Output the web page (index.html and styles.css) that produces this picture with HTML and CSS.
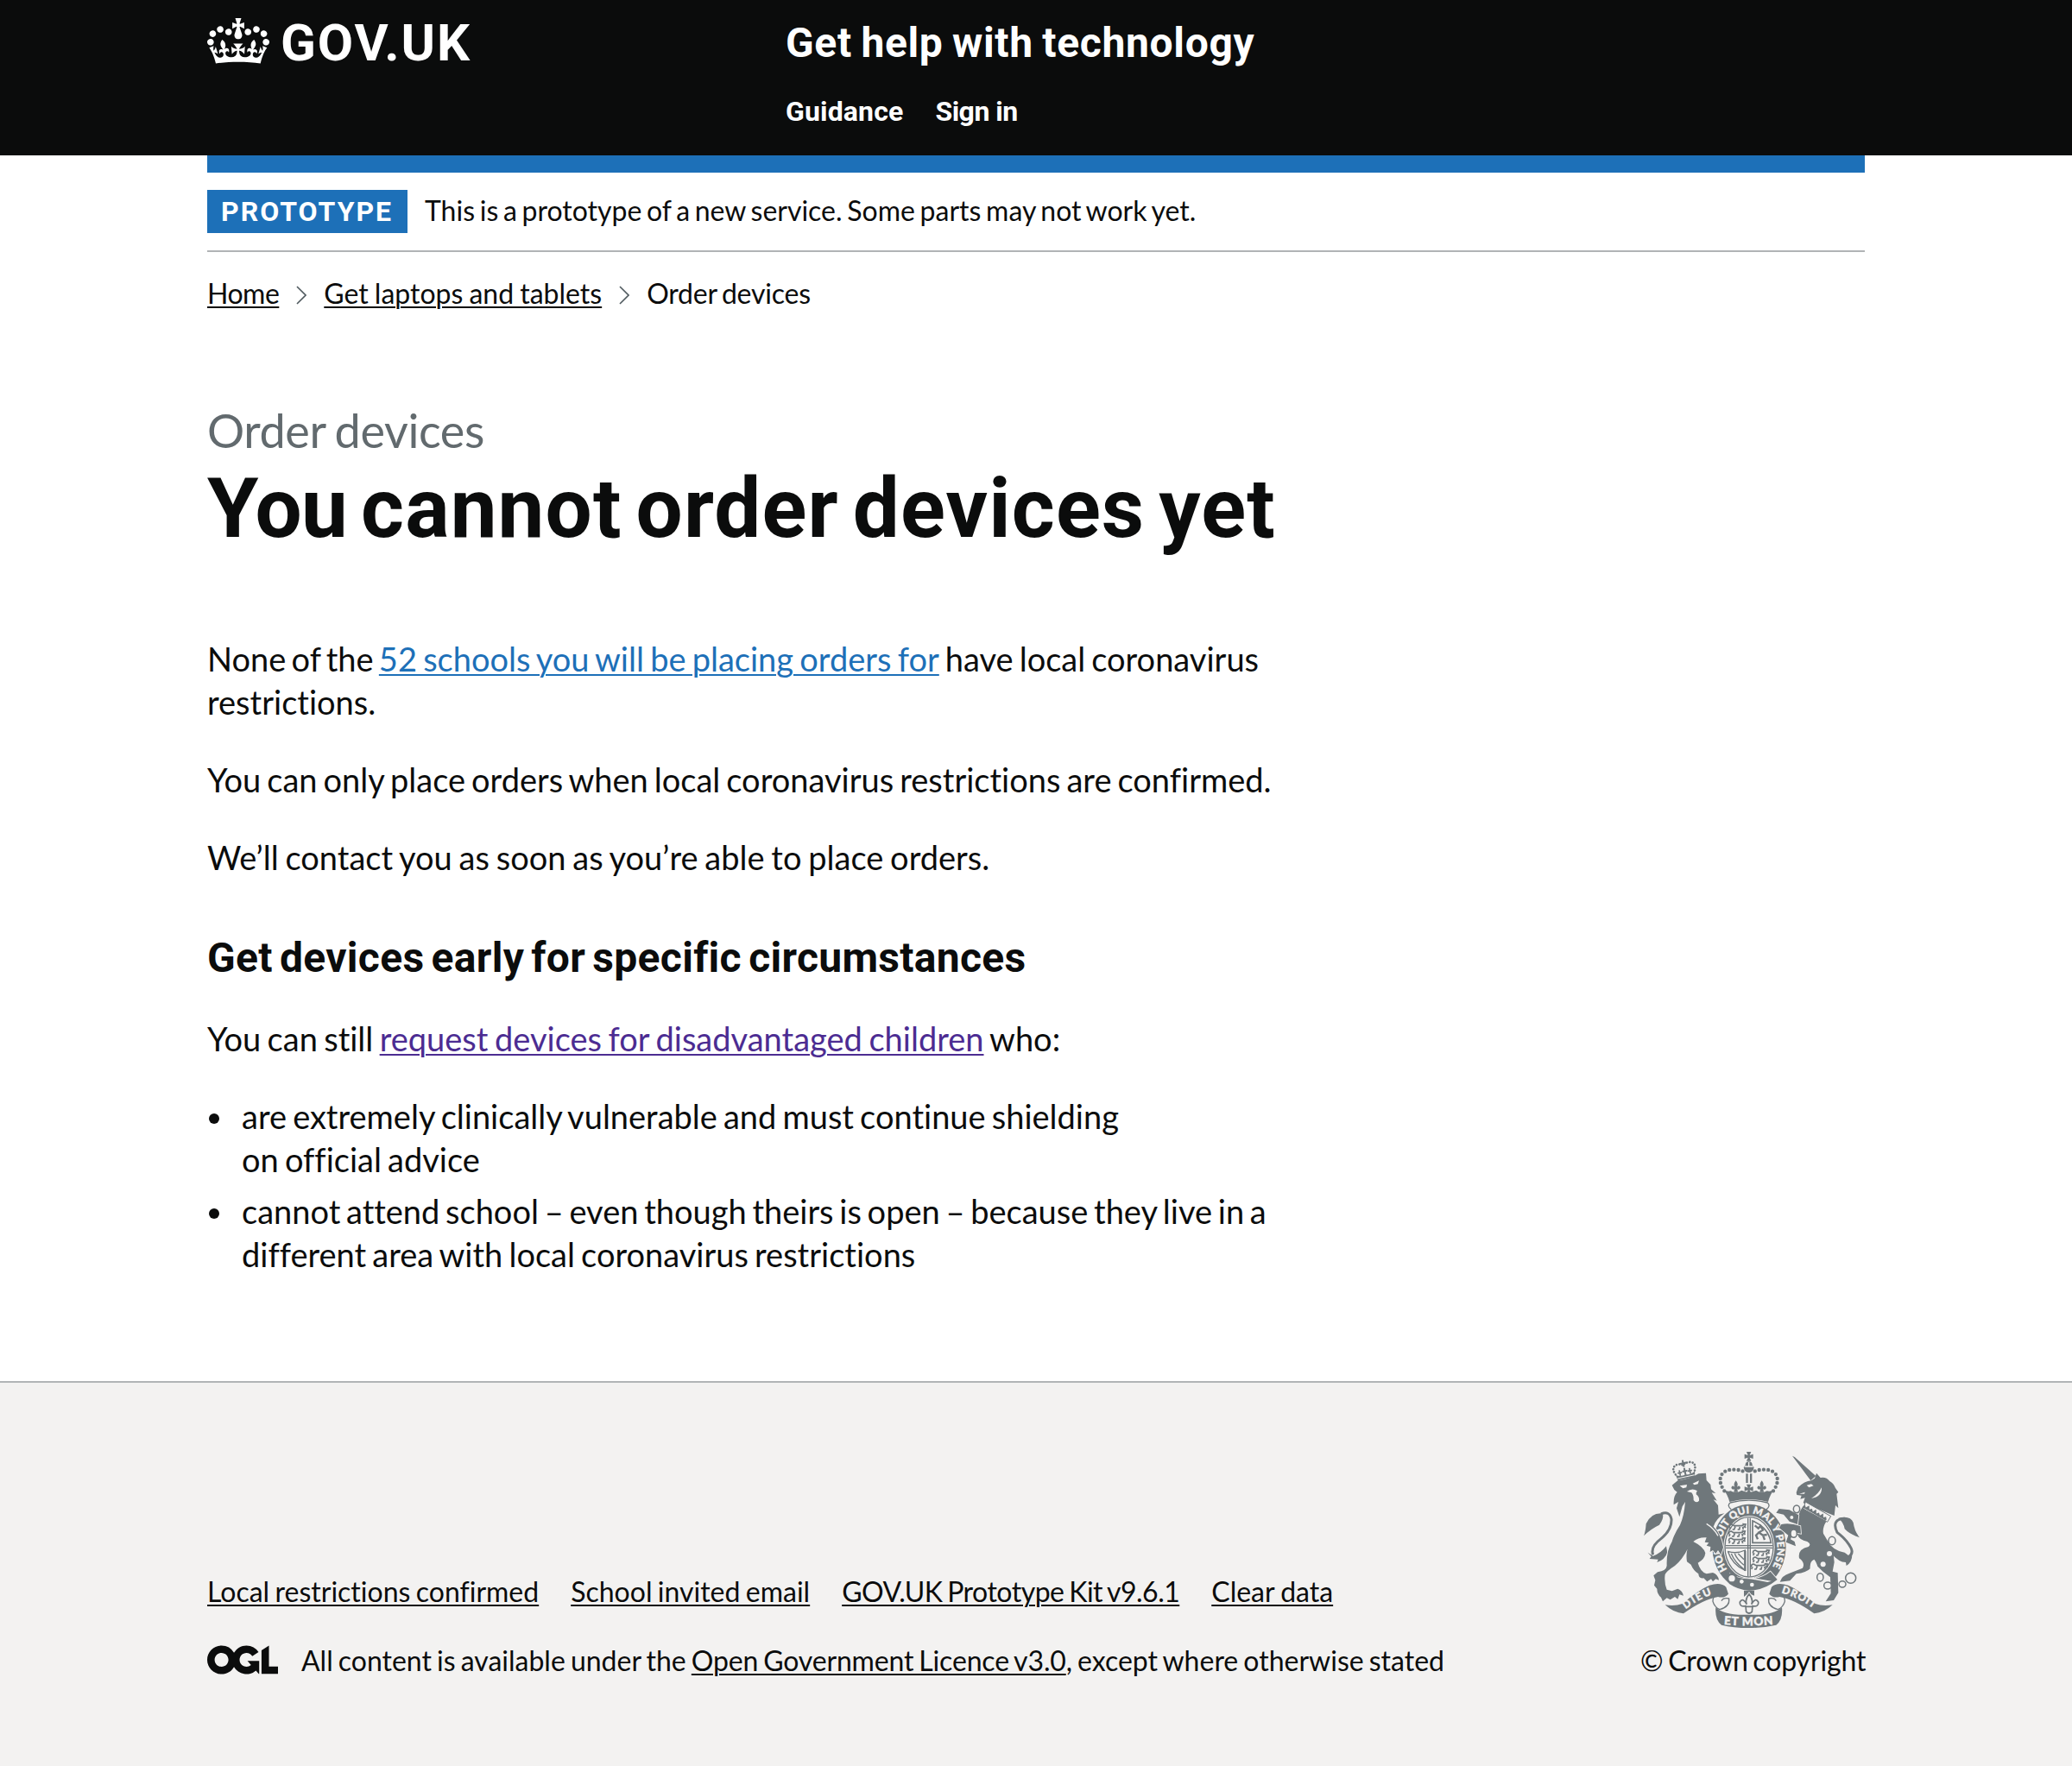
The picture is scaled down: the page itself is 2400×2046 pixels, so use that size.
FILE: index.html
```html
<!DOCTYPE html>
<html lang="en">
<head>
<meta charset="utf-8">
<title>You cannot order devices yet – Get help with technology</title>
<link rel="stylesheet" href="styles.css">
</head>
<body>
<header class="header">
  <div class="container header-inner">
    <a class="logo" href="#">
      <svg class="logo-crown" viewBox="0 0 132 97" aria-hidden="true"><path fill="currentColor" fill-rule="evenodd" d="M25 30.2c3.5 1.5 7.7-.2 9.1-3.7 1.5-3.6-.2-7.8-3.9-9.2-3.6-1.4-7.6.3-9.1 3.9-1.4 3.5.3 7.5 3.9 9zM9 39.5c3.6 1.5 7.8-.2 9.2-3.7 1.5-3.6-.2-7.8-3.9-9.1-3.6-1.5-7.6.2-9.1 3.8-1.4 3.5.3 7.5 3.8 9zM4.4 57.2c3.5 1.5 7.7-.2 9.1-3.8 1.5-3.6-.2-7.7-3.9-9.1-3.5-1.5-7.6.3-9.1 3.8-1.4 3.5.3 7.6 3.9 9.1zm38.3-21.4c3.5 1.5 7.7-.2 9.1-3.8 1.5-3.6-.2-7.7-3.9-9.1-3.6-1.5-7.6.3-9.1 3.8-1.3 3.6.4 7.7 3.9 9.1zm64.4-5.6c-3.6 1.5-7.8-.2-9.1-3.7-1.5-3.6.2-7.8 3.8-9.2 3.6-1.4 7.7.3 9.2 3.9 1.3 3.5-.4 7.5-3.9 9zm15.9 9.3c-3.6 1.5-7.7-.2-9.1-3.7-1.5-3.6.2-7.8 3.7-9.1 3.6-1.5 7.7.2 9.2 3.8 1.5 3.5-.3 7.5-3.8 9zm4.7 17.7c-3.6 1.5-7.8-.2-9.2-3.8-1.5-3.6.2-7.7 3.9-9.1 3.6-1.5 7.7.3 9.2 3.8 1.3 3.5-.4 7.6-3.9 9.1zM89.3 35.8c-3.6 1.5-7.8-.2-9.2-3.8-1.4-3.6.2-7.7 3.9-9.1 3.6-1.5 7.7.3 9.2 3.8 1.4 3.6-.3 7.7-3.9 9.1zM69.7 17.7l8.9 4.7V9.3l-8.9 2.8c-.2-.3-.5-.6-.9-.9L72.4 0H59.6l3.5 11.2c-.3.3-.6.5-.9.9l-8.8-2.8v13.1l8.8-4.7c.3.3.6.7.9.9l-5 15.4v.1c-.2.8-.4 1.6-.4 2.4 0 4.1 3.1 7.5 7 8.1h.2c.3 0 .7.1 1 .1.4 0 .7 0 1-.1h.2c4-.6 7.1-4.1 7.1-8.1 0-.8-.1-1.7-.4-2.4V34l-5.1-15.4c.4-.2.7-.6 1-.9zM66 92.8c16.9 0 32.8 1.1 47.1 3.2 4-16.9 8.9-26.7 14-33.5l-9.6-3.4c1 4.9 1.1 7.2 0 10.2-1.5-1.4-3-4.3-4.2-8.7L108.6 76c2.8-2 5-3.2 7.5-3.3-4.4 9.4-10 11.9-13.6 11.2-4.3-.8-6.3-4.6-5.6-7.9 1-4.7 5.7-5.9 8-.5 4.3-8.7-3-11.4-7.6-8.8 7.1-7.2 7.9-13.5 2.1-21.1-8 6.1-8.1 12.3-4.5 20.8-4.7-5.4-12.1-2.5-9.5 6.2 3.4-5.2 7.9-2 7.2 3.1-.6 4.3-6.4 7.8-13.5 7.2-10.3-.9-10.9-8-11.2-13.8 2.5-.5 7.1 1.8 11 7.3L80.2 60c-4.1 4.4-8 5.3-12.3 5.4 1.4-4.4 8-11.6 8-11.6H55.5s6.4 7.2 7.9 11.6c-4.2-.1-8-1-12.3-5.4l1.4 16.4c3.9-5.5 8.5-7.7 10.9-7.3-.3 5.8-.9 12.8-11.1 13.8-7.2.6-12.9-2.9-13.5-7.2-.7-5 3.8-8.3 7.1-3.1 2.7-8.7-4.6-11.6-9.4-6.2 3.7-8.5 3.6-14.7-4.6-20.8-5.8 7.6-5 13.9 2.2 21.1-4.7-2.6-11.9.1-7.7 8.8 2.3-5.5 7.1-4.2 8.1.5.7 3.3-1.3 7.1-5.7 7.9-3.5.7-9-1.8-13.5-11.2 2.5.1 4.7 1.3 7.5 3.3l-4.7-15.4c-1.2 4.4-2.7 7.2-4.3 8.7-1.1-3-.9-5.3 0-10.2l-9.5 3.4c5 6.9 9.9 16.7 14 33.5 14.8-2.1 30.8-3.2 47.7-3.2z"/></svg>
      <span class="logo-text">GOV.UK</span>
    </a>
    <div class="header-content">
      <a class="service-name" href="#">Get help with technology</a>
      <nav class="header-nav">
        <a class="nav-guidance" href="#">Guidance</a>
        <a class="nav-signin" href="#">Sign in</a>
      </nav>
    </div>
  </div>
</header>

<div class="container page">
  <div class="phase-banner">
    <strong class="tag">PROTOTYPE</strong>
    <span class="phase-text">This is a prototype of a new service. Some parts may not work yet.</span>
  </div>
  <nav class="breadcrumbs">
    <a class="crumb-home" href="#">Home</a>
    <svg class="chevron" viewBox="0 0 12 22" aria-hidden="true"><path d="M1 1l10 10L1 21"/></svg>
    <a class="crumb-laptops" href="#">Get laptops and tablets</a>
    <svg class="chevron" viewBox="0 0 12 22" aria-hidden="true"><path d="M1 1l10 10L1 21"/></svg>
    <span class="crumb-current">Order devices</span>
  </nav>

  <main class="main">
    <span class="caption">Order devices</span>
    <h1 class="title"><span class="title-lead">You</span> cannot order devices yet</h1>
    <p class="body body-none"><span class="lead-none">None of the </span><a class="link link-schools" href="#">52 schools you will be placing orders for</a> have local coronavirus<br>restrictions.</p>
    <p class="body body-only">You can only place orders when local coronavirus restrictions are confirmed.</p>
    <p class="body body-contact">We’ll contact you as soon as you’re able to place orders.</p>
    <h2 class="subtitle">Get devices early for specific circumstances</h2>
    <p class="body body-still">You can still <a class="link link-visited" href="#">request devices for disadvantaged children</a> who:</p>
    <ul class="list">
      <li>are extremely clinically vulnerable and must continue shielding<br>on official advice</li>
      <li><span class="item-wide">cannot attend school – even though theirs is open – because they live in a</span><br>different area with local coronavirus restrictions</li>
    </ul>
  </main>
</div>

<footer class="footer">
  <div class="container footer-inner">
    <div class="footer-meta">
      <nav class="footer-links">
        <a class="foot-local" href="#">Local restrictions confirmed</a>
        <a class="foot-school" href="#">School invited email</a>
        <a class="foot-kit" href="#">GOV.UK Prototype Kit v9.6.1</a>
        <a class="foot-clear" href="#">Clear data</a>
      </nav>
      <div class="licence">
        <svg class="ogl" viewBox="0 0 483.2 195.7" aria-hidden="true"><path fill="currentColor" d="M421.5 142.8V.1l-50.7 32.3v161.1h112.4v-50.7zm-122.3-9.6A47.12 47.12 0 0 1 221 97.8c0-26 21.1-47.1 47.1-47.1 16.7 0 31.4 8.7 39.7 21.8l42.7-27.2A97.63 97.63 0 0 0 268.1 0c-36.5 0-68.3 20.1-85.1 49.7A98 98 0 0 0 97.8 0C43.9 0 0 43.9 0 97.8s43.9 97.8 97.8 97.8c36.5 0 68.3-20.1 85.1-49.7a97.76 97.76 0 0 0 149.6 25.4l19.4 22.2h3v-87.8h-80l24.3 27.5zM97.8 145c-26 0-47.1-21.1-47.1-47.1s21.1-47.1 47.1-47.1 47.1 21.1 47.1 47.1S123.8 145 97.8 145"/></svg>
        <span class="licence-text">All content is available under the <a class="licence-link" href="#">Open Government Licence v3.0</a>, except where otherwise stated</span>
      </div>
    </div>
    <a class="copyright" href="#">
      <svg class="crest" viewBox="72 66 750 612" aria-hidden="true">
        <defs>
          <path id="garter-line" d="M371 486A98 119 0 1 1 505 486"/>
          <path id="dieu-line" d="M218 613Q262 578 320 558"/>
          <path id="mon-line" d="M350 666Q437 674 524 666"/>
          <path id="droit-line" d="M550 556Q612 573 668 615"/>
          <path id="pattee" d="M-8-16H8L3-4 15-8V8L3 4 8 16H-8L-3 4-15 8V-8L-3-4Z"/>
          <path id="fleur" d="M0-20Q10-8 4 2Q14-6 16 6Q10 14 5 9L7 20H-7L-5 9Q-10 14-16 6Q-14-6-4 2Q-10-8 0-20Z"/>
          <g id="passant" class="thin"><path d="M-28 3Q-30-8-20-8L-12-3H12Q22-4 20-9L28-8L25 0L18 3L20 10M-8 0L-12 10L-18 10M8 1L6 10H0M-24 2L-28 10M24-3L28 4"/></g>
        </defs>

        <!-- crown -->
        <use href="#pattee" x="437" y="82"/>
        <path d="M425 112Q425 100 437 100Q449 100 449 112L455 120Q452 138 437 138Q422 138 419 120Z"/>
        <path class="cut" d="M422 117H452M437 102V117"/>
        <path class="beads" d="M352 202C322 160 342 126 384 128Q408 127 424 138"/>
        <path class="beads" d="M522 202C552 160 532 126 490 128Q466 127 450 138"/>
        <path d="M427 142h7v32h-7zM441 142h7v32h-7z"/>
        <use href="#fleur" x="392" y="186"/>
        <use href="#fleur" x="482" y="186"/>
        <use href="#pattee" x="437" y="195"/>
        <path d="M348 196Q360 206 374 202Q392 212 412 200Q437 212 462 200Q482 212 500 202Q514 206 526 196Q510 216 504 240Q437 222 370 240Q364 216 348 196Z"/>
        <path class="line" d="M372 243Q437 226 502 243Q514 254 498 266M372 243Q360 254 376 266"/>

        <!-- garter and shield -->
        <ellipse cx="438" cy="397" rx="128" ry="149"/>
        <ellipse class="paper" cx="438" cy="397" rx="89" ry="109"/>
        <ellipse class="line" cx="438" cy="397" rx="84" ry="104"/>
        <path class="line" d="M434 296V498M442 296V498M356 392H520M356 400H520"/>
        <use href="#passant" x="398" y="326"/><use href="#passant" x="396" y="350"/><use href="#passant" x="396" y="374"/>
        <use href="#passant" x="480" y="416"/><use href="#passant" x="480" y="440"/><use href="#passant" x="474" y="464"/>
        <path class="thin" d="M450 306Q506 330 514 382H450Z"/>
        <path class="bold" d="M458 322l12 10 8-8 8 14-14 8 14 10 14-2M472 346l-10 10 6 14M486 356l6 16"/>
        <path class="line" d="M364 412Q394 422 424 408V478Q380 460 364 412M376 420Q388 450 420 474M388 420Q396 440 420 460M400 420L420 440"/>
        <path class="bold" d="M424 410V480"/>
        <text class="motto motto-ring"><textPath href="#garter-line" startOffset="14" textLength="490">HON SOIT QUI MAL Y PENSE</textPath></text>
        <path class="edge" d="M372 490Q400 508 438 508Q480 508 512 482L536 510Q490 548 438 548Q400 546 368 524Z"/>
        <circle class="ring" cx="378" cy="506" r="15"/>
        <circle class="paper" cx="412" cy="517" r="7"/><circle class="paper" cx="448" cy="528" r="7"/>
        <path class="paper" d="M440 503L516 515L502 519L434 506Z"/>

        <!-- lion -->
        <path class="line tail" d="M104 424Q94 396 132 368Q170 336 168 300Q162 270 132 282"/>
        <path d="M72 358Q78 344 80 316Q98 276 138 280Q142 300 126 320Q96 334 72 358Z"/>
        <path d="M86 416L104 428Q130 420 150 394L154 416Q146 440 118 450L122 440L92 438L98 430Z"/>
        <path class="edge" d="M170 182L190 166Q235 160 262 142L288 140L290 165L304 180L306 196L322 210L308 208L326 236L314 232L330 252L332 284L352 280Q322 300 314 326Q340 350 348 398L340 424L330 408L322 420L312 408L302 414L304 396L290 392L298 382L284 380L290 364Q262 362 244 378Q280 396 286 418Q284 440 260 452Q268 482 290 490L312 486Q330 492 333 512L322 508L312 517L306 508L292 517L280 505Q262 508 262 490Q244 478 236 458L222 448Q218 420 224 404Q206 440 180 462Q152 480 146 492Q142 520 152 545L170 550L190 542Q206 548 210 566L196 562L190 578L180 570L164 580L152 574L138 586L132 572Q118 560 118 542L108 530L112 512L106 496L120 484Q150 480 152 462Q150 410 170 378Q178 350 198 320Q212 290 216 240L206 256L196 292L186 262L192 240L176 250Q174 220 188 206L178 198Z"/>
        <path class="paper" d="M197 184L222 180L220 190L208 193ZM242 176L264 166L260 178L248 181ZM222 204Q240 190 258 202Q252 208 254 214Q266 222 264 236Q254 246 245 234Q246 218 238 208Z"/>
        <path class="cut" d="M290 316Q316 332 330 358"/>
        <g transform="rotate(-12 214 130)">
          <path d="M180 140Q196 150 214 146Q232 150 248 140L244 160H184Z"/>
          <path class="cut cut-fine" d="M184 153H244"/>
          <path class="beads beads-small" d="M180 138Q168 112 190 106Q204 104 212 112Q222 104 238 106Q260 112 248 138"/>
          <path d="M211 94h6v8h8v6h-8v10h-6v-10h-8v-6h8zM211 122h6v8h6v6h-6v12h-6v-12h-6v-6h6zM193 126h5v7h5v5h-5v8h-5v-8h-5v-5h5zM229 126h5v7h5v5h-5v8h-5v-8h-5v-5h5z"/>
        </g>

        <!-- unicorn -->
        <path d="M588 80L596 84L670 150L652 166Z"/>
        <path d="M602 208L608 190Q630 168 654 166L666 158L672 140L686 156Q706 152 718 168Q732 176 738 192L748 206L742 212L748 262L738 252L734 288Q680 266 626 244L632 226L616 230L620 218L604 216Z"/>
        <path class="paper" d="M638 182L654 178L662 184L646 190ZM690 190Q692 222 654 228Q678 214 690 190ZM612 212L632 206L630 212Z"/>
        <path class="edge" d="M626 254L706 308Q692 330 696 350Q716 384 730 410L734 450L728 482L746 487L748 556L732 582L704 586L722 558L720 502Q694 484 676 464Q670 446 664 440Q648 446 650 472Q638 486 602 490L580 514L545 518Q552 496 578 488L624 470Q634 452 612 436Q606 404 644 396Q656 388 640 378Q600 370 606 336Q600 290 626 254Z"/>
        <path class="collar" d="M634 240L722 290L710 310L626 264Z"/>
        <path transform="translate(634 243) rotate(29.6)" d="M0 19L2 7L9 14L16 2L23 14L30 7L37 14L44 2L51 14L58 7L65 14L72 2L79 14L86 7L92 14V19Z"/>
        <path class="edge" d="M610 286L578 268L542 264L532 278L558 284L578 308L606 318ZM616 324Q580 312 550 318L542 330L574 356L566 380L600 394L596 378L582 370L592 346L618 350Z"/>
        <path class="line tail" d="M782 432Q802 420 792 400Q776 370 744 346Q722 300 770 298"/>
        <path d="M748 296Q790 286 800 312Q804 342 822 364Q786 352 770 334Q766 310 748 296Z"/>
        <path d="M708 372Q728 410 770 416L786 428L796 424Q796 450 776 462L774 450Q750 450 724 420Z"/>
        <g class="chain">
          <ellipse cx="603" cy="265" rx="11" ry="13"/><ellipse cx="593" cy="350" rx="11" ry="14"/>
          <ellipse cx="726" cy="375" rx="12" ry="14"/><ellipse cx="685" cy="502" rx="11" ry="14"/>
          <ellipse cx="711" cy="531" rx="13" ry="12"/><ellipse cx="762" cy="526" rx="12" ry="11"/>
          <circle cx="791" cy="505" r="18"/>
        </g>
        <circle class="paper" cx="717" cy="420" r="9"/><circle class="paper" cx="695" cy="457" r="9"/><circle class="paper" cx="586" cy="294" r="6"/>

        <!-- motto scroll -->
        <path class="edge" d="M146 598Q180 604 206 594Q262 546 300 530Q340 518 358 536L366 560Q352 576 330 570Q280 578 210 628Q176 626 146 598Z"/>
        <path class="edge" d="M728 598Q694 604 668 594Q612 546 574 530Q534 518 516 536L508 560Q522 576 544 570Q594 578 664 628Q698 626 728 598Z"/>
        <path class="line" d="M356 540Q310 560 312 586Q318 606 336 614Q372 604 368 576Q348 572 342 584"/>
        <path class="line" d="M518 540Q564 560 562 586Q556 606 538 614Q502 604 506 576Q526 572 532 584"/>
        <path d="M322 606Q350 636 437 632Q524 636 552 606Q556 650 532 668Q490 678 437 678Q384 678 342 668Q318 650 322 606Z"/>
        <text class="motto motto-side"><textPath href="#dieu-line" textLength="104">DIEU</textPath></text>
        <text class="motto motto-base"><textPath href="#mon-line" textLength="172">ET MON</textPath></text>
        <text class="motto motto-side"><textPath href="#droit-line" textLength="124">DROIT</textPath></text>
        <path d="M420 548H456V566L446 562L438 552L430 562L420 570Z"/>
        <path class="thin" d="M438 560Q454 580 446 596Q460 570 470 588Q472 606 450 602L448 622Q438 632 428 622L426 602Q404 606 406 588Q416 570 430 596Q422 580 438 560ZM424 604H452"/>
      </svg>
      <span class="copyright-text">© Crown copyright</span>
    </a>
  </div>
</footer>
</body>
</html>
```
FILE: styles.css
```css
* { box-sizing: border-box; }
body {
  margin: 0;
  background: #fff;
  color: #0b0c0c;
  font: 32px/40px Lato, "Liberation Sans", sans-serif;
  font-variant-ligatures: none;
  word-spacing: -2.4px;
}
a {
  color: inherit;
  white-space: nowrap;
  text-decoration-thickness: 2px;
  text-underline-offset: 3px;
}
h1, h2, p, ul { margin: 0; padding: 0; }
svg { display: block; flex: none; }
.container { width: 1920px; margin: 0 auto; }

.header { height: 180px; background: #0b0c0c; color: #fff; }
.header a { text-decoration: none; }
.header, .tag, .title, .subtitle {
  font-family: Roboto, "Liberation Sans", sans-serif;
  font-weight: 700;
  word-spacing: 0;
}
.header-inner {
  display: grid;
  grid-template-columns: 670px 1fr;
  height: 200px;
  border-bottom: 20px solid #1d70b8;
}
.logo { display: flex; gap: 13px; align-items: flex-start; padding-top: 20px; }
.logo-crown { width: 72px; height: 53px; margin-top: 1px; }
.logo-text { font-size: 60px; line-height: 60px; letter-spacing: 1.9px; }
.header-content { padding-top: 25px; }
.service-name {
  display: block;
  font-size: 48px;
  line-height: 50px;
  letter-spacing: .65px;
  word-spacing: -2px;
}
.header-nav { display: flex; gap: 37px; margin-top: 34px; }
.nav-guidance { letter-spacing: .15px; }
.nav-signin { letter-spacing: -.5px; }

.page { padding-top: 20px; }
.phase-banner {
  display: flex;
  gap: 20px;
  padding: 20px 0;
  border-bottom: 2px solid #b1b4b6;
}
.tag {
  width: 232px;
  padding-left: 16px;
  background: #1d70b8;
  color: #fff;
  line-height: 50px;
  letter-spacing: 2px;
}
.phase-text { padding-top: 4px; word-spacing: -2.5px; }

.breadcrumbs { display: flex; align-items: center; margin-top: 28px; }
.chevron {
  width: 12px;
  height: 22px;
  margin: 4px 20px 0;
  fill: none;
  stroke: #505a5f;
  stroke-width: 1.6;
}
.crumb-home { letter-spacing: -.5px; }
.crumb-laptops { word-spacing: -1.1px; }
.crumb-current { letter-spacing: -.2px; }

.main { padding: 109px 0 122px; }
.caption {
  display: block;
  color: #626a6e;
  font-size: 54px;
  line-height: 60px;
  letter-spacing: -.4px;
}
.title {
  margin: 10px 0 99px;
  font-size: 96px;
  line-height: 100px;
  letter-spacing: 1.15px;
  word-spacing: -9px;
}
.title-lead { letter-spacing: -.8px; }
.body, .list { font-size: 38px; line-height: 50px; word-spacing: -2.7px; }
.body { margin-bottom: 40px; }
.lead-none { word-spacing: -3.4px; }
.body-contact { word-spacing: -1.9px; }
.body-still { word-spacing: -2.4px; }
.link { color: #1d70b8; }
.link-schools { word-spacing: -2.5px; }
.link-visited { color: #4c2c92; word-spacing: -2.1px; }
.subtitle {
  margin: 67px 0 43px;
  font-size: 48px;
  line-height: 50px;
  letter-spacing: .3px;
  word-spacing: -4px;
}
.list { list-style: none; word-spacing: -2.6px; }
.list li { position: relative; padding-left: 40px; }
.list li + li { margin-top: 10px; }
.list li::before {
  content: "";
  position: absolute;
  left: 2px;
  top: 22px;
  width: 12px;
  height: 12px;
  border-radius: 50%;
  background: #0b0c0c;
}
.item-wide { word-spacing: -3px; }

.footer { height: 446px; border-top: 2px solid #b1b4b6; background: #f3f2f1; }
.footer-inner { display: flex; justify-content: space-between; align-items: flex-end; padding-top: 80px; }
.footer-links { display: flex; gap: 37px; margin-bottom: 40px; }
.foot-local, .foot-school { word-spacing: -1.8px; }
.foot-kit { letter-spacing: -.5px; word-spacing: -2px; }
.foot-clear { word-spacing: -1px; }
.licence { display: flex; gap: 27px; }
.ogl { width: 82px; height: 34px; margin-top: 2px; }
.licence-text { white-space: nowrap; word-spacing: -2.1px; }
.licence-link { letter-spacing: -.15px; }
.copyright { width: 260px; text-decoration: none; }
.copyright-text { display: block; letter-spacing: -.13px; text-align: right; }

.crest { width: 250px; height: 204px; margin: 0 0 18px 4px; fill: #6f777b; }
.crest .paper { fill: #f3f2f1; stroke: none; }
.crest .edge { stroke: #f3f2f1; stroke-width: 5; paint-order: stroke; }
.crest .line { fill: none; stroke: #6f777b; stroke-width: 4; }
.crest .tail { stroke-width: 9; }
.crest .thin { fill: none; stroke: #6f777b; stroke-width: 5; }
.crest .bold { fill: none; stroke: #6f777b; stroke-width: 7; }
.crest .cut { fill: none; stroke: #f3f2f1; stroke-width: 4; }
.crest .cut-fine { stroke-width: 3; }
.crest .ring { fill: #f3f2f1; stroke: #6f777b; stroke-width: 8; }
.crest .chain { fill: #f3f2f1; stroke: #6f777b; stroke-width: 4.5; }
.crest .collar { fill: #f3f2f1; stroke: #6f777b; stroke-width: 3; }
.crest .beads {
  fill: none;
  stroke: #6f777b;
  stroke-width: 13;
  stroke-linecap: round;
  stroke-dasharray: 0 15.5;
}
.crest .beads-small { stroke-width: 8; stroke-dasharray: 0 10; }
.crest .motto {
  fill: #f3f2f1;
  stroke: #f3f2f1;
  stroke-width: 1.2;
  font-family: Lato, sans-serif;
  font-weight: 900;
  letter-spacing: 0;
  word-spacing: 0;
}
.crest .motto-ring { font-size: 35px; }
.crest .motto-side { font-size: 36px; }
.crest .motto-base { font-size: 41px; }
```
